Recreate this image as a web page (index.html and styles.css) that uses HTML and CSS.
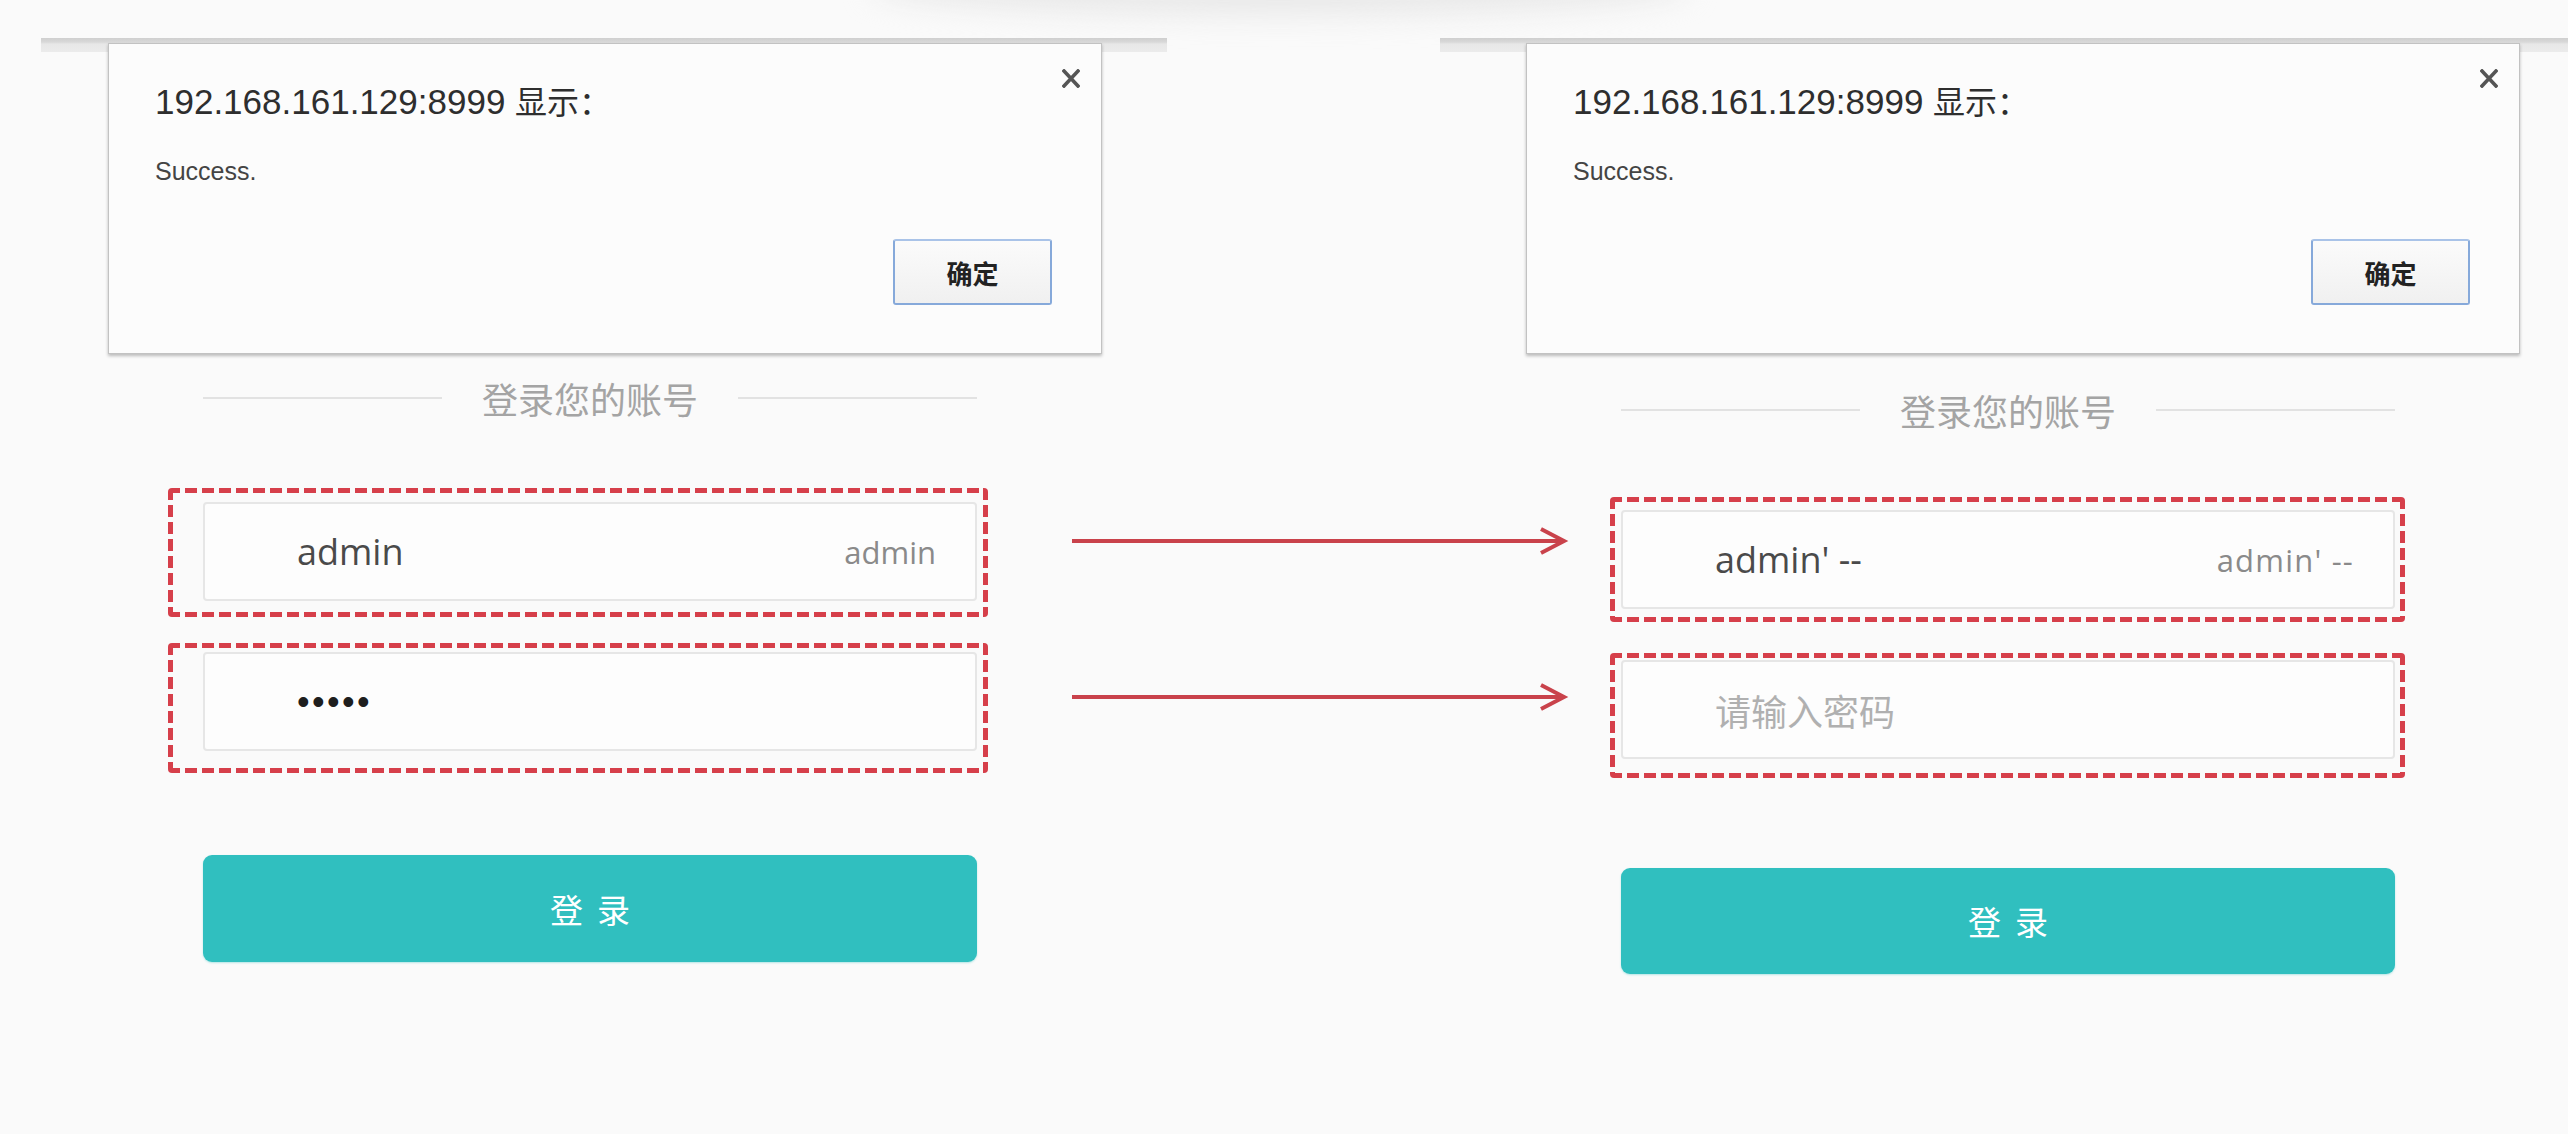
FILE: index.html
```html
<!DOCTYPE html>
<html lang="zh-CN">
<head>
<meta charset="utf-8">
<title>登录您的账号</title>
<link rel="stylesheet" href="styles.css">
</head>
<body>
<div class="stage">
  <div class="top-shade"></div>

  <section class="panel panel--left">
    <div class="tabbar"></div>
    <div class="login">
      <div class="login__head"><span class="login__rule"></span><span class="login__title">登录您的账号</span><span class="login__rule"></span></div>
      <div class="field">
        <span class="field__value">admin</span>
        <span class="field__hint">admin</span>
        <span class="mark mark--lu"></span>
      </div>
      <div class="field">
        <span class="field__dots">•••••</span>
        <span class="mark mark--lp"></span>
      </div>
      <div class="login__btn">登录</div>
    </div>
    <div class="alert">
      <div class="alert__title">192.168.161.129:8999 <span class="cjk">显示：</span></div>
      <div class="alert__msg">Success.</div>
      <div class="alert__ok">确定</div>
      <svg class="alert__close" viewBox="0 0 18 19"><path d="M2 2 L16 17 M16 2 L2 17"/></svg>
    </div>
  </section>

  <section class="panel panel--right">
    <div class="tabbar"></div>
    <div class="login">
      <div class="login__head"><span class="login__rule"></span><span class="login__title">登录您的账号</span><span class="login__rule"></span></div>
      <div class="field">
        <span class="field__value">admin' --</span>
        <span class="field__hint field__hint--wide">admin' --</span>
        <span class="mark mark--ru"></span>
      </div>
      <div class="field">
        <span class="field__placeholder">请输入密码</span>
        <span class="mark mark--rp"></span>
      </div>
      <div class="login__btn">登录</div>
    </div>
    <div class="alert">
      <div class="alert__title">192.168.161.129:8999 <span class="cjk">显示：</span></div>
      <div class="alert__msg">Success.</div>
      <div class="alert__ok">确定</div>
      <svg class="alert__close" viewBox="0 0 18 19"><path d="M2 2 L16 17 M16 2 L2 17"/></svg>
    </div>
  </section>

  <svg class="arrows" viewBox="0 0 2568 1134">
    <line x1="1072" y1="541" x2="1562" y2="541"/>
    <polyline points="1541,529 1564,541 1541,553"/>
    <line x1="1072" y1="697" x2="1562" y2="697"/>
    <polyline points="1541,685 1564,697 1541,709"/>
  </svg>
</div>
</body>
</html>
```

FILE: styles.css
```css
* { box-sizing: border-box; }

html, body {
  margin: 0;
  padding: 0;
}

body {
  width: 2568px;
  height: 1134px;
  overflow: hidden;
  background: #fafafa;
  font-family: "Liberation Sans", "Noto Sans CJK SC", sans-serif;
}

.stage {
  position: relative;
  display: flex;
  gap: 273px;
  height: 1134px;
  padding: 38px 0 0 41px;
}

.top-shade {
  position: absolute;
  left: 870px;
  top: -40px;
  width: 820px;
  height: 56px;
  border-radius: 50%;
  background: #e9e9e9;
  filter: blur(14px);
}

.panel {
  position: relative;
  flex: none;
}

.panel--left {
  width: 1126px;
  --form-left: 162px;
  --form-top: 325px;
  --head-gap: 84px;
  --btn-gap: 104px;
  --btn-h: 107px;
  --alert-left: 67px;
}

.panel--right {
  width: 1128px;
  --form-left: 181px;
  --form-top: 337px;
  --head-gap: 80px;
  --btn-gap: 109px;
  --btn-h: 106px;
  --alert-left: 86px;
}

.tabbar {
  height: 14px;
  background: linear-gradient(#cfcfcf 0, #d8d8d8 4px, #e7e7e7 6px, #ebebeb 100%);
}

/* login form */
.login {
  width: 774px;
  margin: calc(var(--form-top) + 1px) 0 0 var(--form-left);
}

.login__head {
  display: flex;
  align-items: center;
  height: 40px;
}

.login__rule {
  flex: 1;
  height: 2px;
  background: #e2e2e2;
}

.login__title {
  margin: 0 40px;
  font-family: "Noto Sans CJK SC", sans-serif;
  font-size: 36px;
  line-height: 40px;
  color: #a4a4a4;
}

.field {
  position: relative;
  display: flex;
  align-items: center;
  justify-content: space-between;
  height: 99px;
  margin-top: 51px;
  padding: 0 39px 0 92px;
  border: 2px solid #e6e6e6;
  border-radius: 4px;
  background: #fdfdfd;
}

.login__head + .field {
  margin-top: var(--head-gap);
}

.field__value {
  font-family: "Open Sans", "Noto Sans CJK SC", sans-serif;
  font-size: 36px;
  color: #4a4a4a;
}

.field__hint {
  font-family: "Open Sans", "Noto Sans CJK SC", sans-serif;
  font-size: 31px;
  color: #8a8a8a;
}

.field__hint--wide {
  letter-spacing: 1.2px;
}

.field__dots {
  font-family: "Liberation Sans", sans-serif;
  font-size: 36px;
  letter-spacing: 2.4px;
  color: #1e1e1e;
}

.field__placeholder {
  font-family: "Noto Sans CJK SC", sans-serif;
  font-size: 36px;
  color: #b0b0b0;
}

/* red dashed annotation frames */
.mark {
  position: absolute;
  border-radius: 4px;
  background:
    repeating-linear-gradient(90deg, #d63f4a 0 12px, transparent 12px 17px) left top / 100% 5px no-repeat,
    repeating-linear-gradient(90deg, #d63f4a 0 12px, transparent 12px 17px) left bottom / 100% 5px no-repeat,
    repeating-linear-gradient(180deg, #d63f4a 0 12px, transparent 12px 17px) left top / 5px 100% no-repeat,
    repeating-linear-gradient(180deg, #d63f4a 0 12px, transparent 12px 17px) right top / 5px 100% no-repeat;
}

.mark--lu { top: -16px; bottom: -18px; left: -37px; right: -13px; }
.mark--lp { top: -11px; bottom: -24px; left: -37px; right: -13px; }
.mark--ru { top: -15px; bottom: -15px; left: -13px; right: -12px; }
.mark--rp { top: -9px; bottom: -21px; left: -13px; right: -12px; }

.login__btn {
  display: flex;
  align-items: center;
  justify-content: center;
  height: var(--btn-h);
  margin-top: var(--btn-gap);
  border-radius: 9px;
  background: #30bfbf;
  box-shadow: 0 1px 2px rgba(48, 191, 191, 0.35);
  font-family: "Noto Sans CJK SC", sans-serif;
  font-size: 33px;
  letter-spacing: 14px;
  text-indent: 14px;
  color: #ffffff;
}

/* browser alert dialog */
.alert {
  position: absolute;
  top: 5px;
  left: var(--alert-left);
  width: 994px;
  display: flex;
  flex-direction: column;
  padding: 36px 49px 48px 46px;
  background: #fcfcfc;
  border: 1px solid #c2c2c2;
  box-shadow: 0 2px 3px rgba(0, 0, 0, 0.25);
}

.alert__title {
  font-size: 35px;
  line-height: 40px;
  color: #2e2e2e;
  white-space: nowrap;
}

.cjk {
  font-family: "Noto Sans CJK SC", sans-serif;
  font-size: 32px;
}

.alert__msg {
  margin-top: 34px;
  font-size: 25px;
  line-height: 30px;
  color: #444444;
}

.alert__ok {
  align-self: flex-end;
  display: flex;
  align-items: center;
  justify-content: center;
  width: 159px;
  height: 66px;
  margin-top: 53px;
  border: 2px solid #86a9da;
  border-top-color: #a9c3e8;
  border-radius: 3px;
  background: linear-gradient(#fbfbfb, #f0f0f0);
  font-family: "Noto Sans CJK SC", sans-serif;
  font-size: 26px;
  font-weight: 700;
  color: #222222;
}

.alert__close {
  position: absolute;
  top: 25px;
  right: 21px;
  width: 18px;
  height: 19px;
  fill: none;
  stroke: #555555;
  stroke-width: 3.6;
  stroke-linecap: square;
}

/* red annotation arrows */
.arrows {
  position: absolute;
  left: 0;
  top: 0;
  width: 2568px;
  height: 1134px;
  fill: none;
  stroke: #c9424b;
  stroke-width: 4;
  pointer-events: none;
}
```
